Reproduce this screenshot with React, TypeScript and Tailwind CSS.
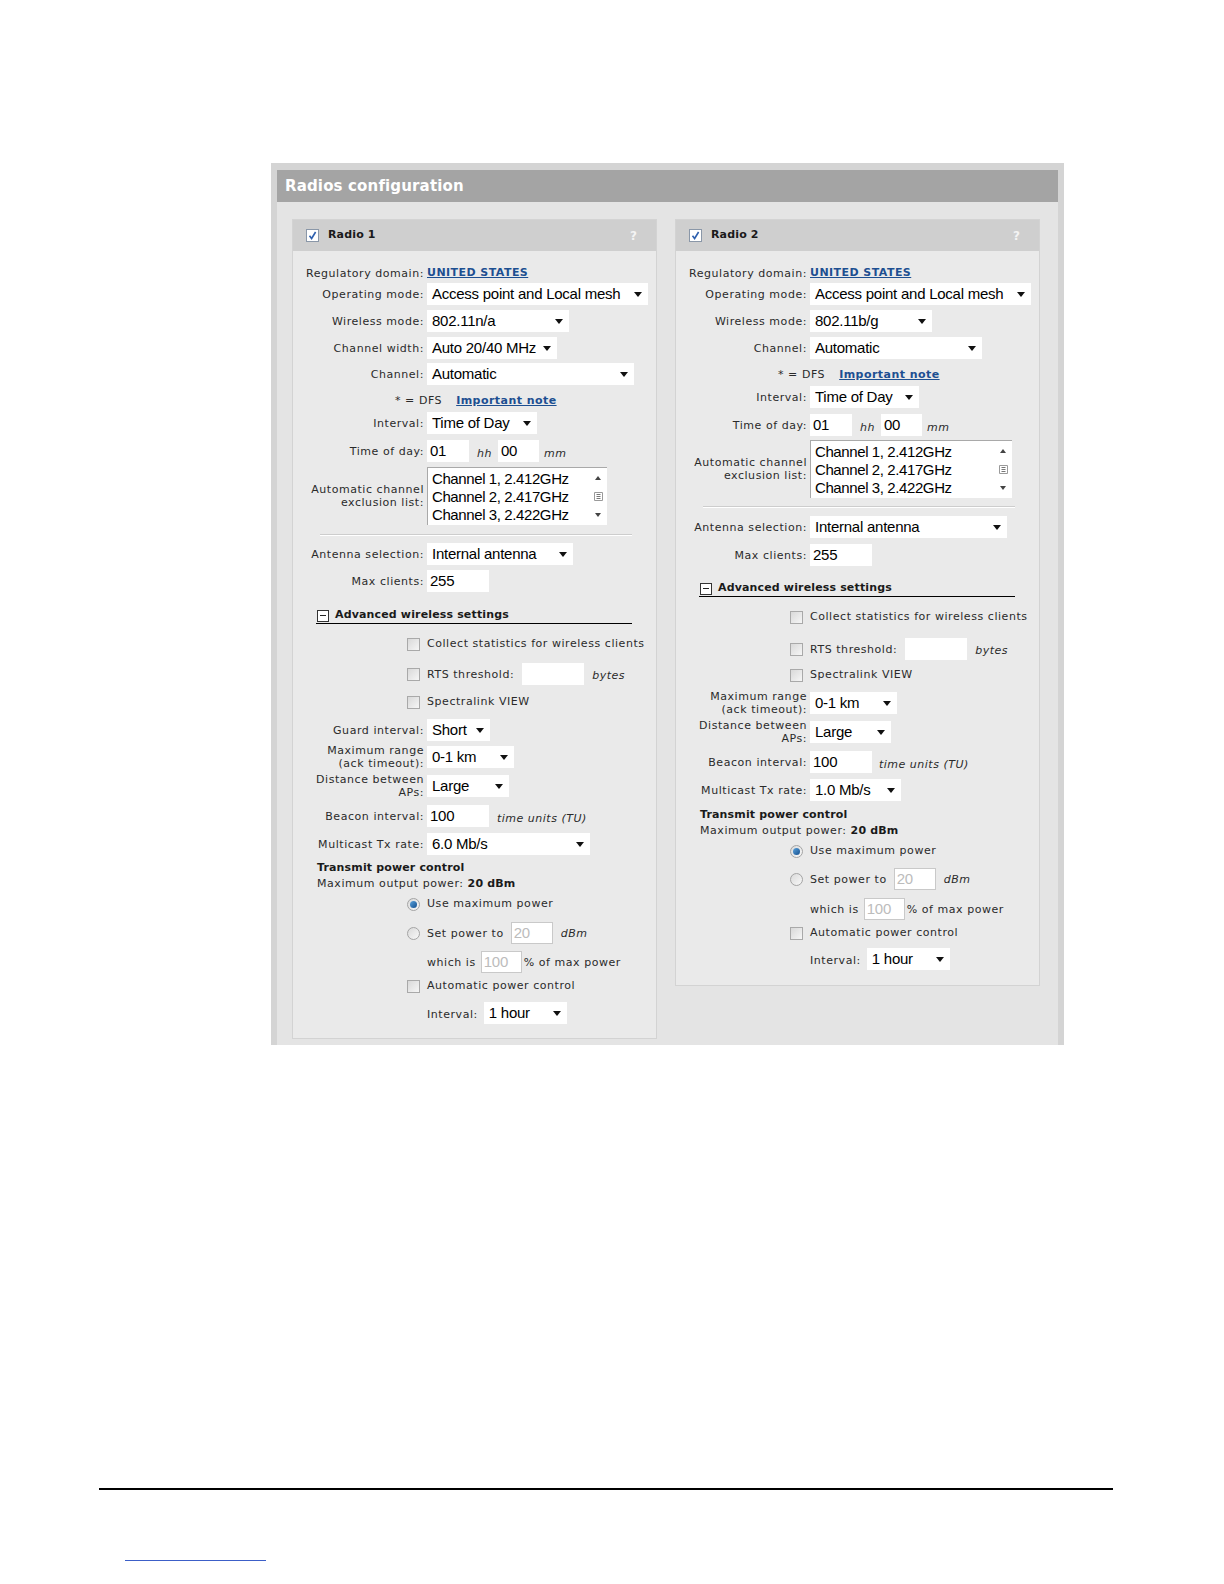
import type { ReactNode } from "react";

const LBL = "font-['DejaVu_Sans',Verdana,sans-serif] text-[11px] tracking-[0.55px] text-[#2a2a2a]";
const BOLD = "font-['DejaVu_Sans',Verdana,sans-serif] text-[11px] font-bold tracking-[0.15px] text-[#1a1a1a]";
const FONT_FIELD = "font-['Liberation_Sans',Arial,sans-serif] text-[15px] tracking-[-0.25px]";
const NOTE = "font-['DejaVu_Sans',Verdana,sans-serif] text-[11px] italic tracking-[0.5px] text-[#2a2a2a]";
const LINK = "font-['DejaVu_Sans',Verdana,sans-serif] text-[11px] font-bold tracking-[0.45px] text-[#1d4f91] underline";

function Caret() {
  return (
    <svg width="8" height="5" viewBox="0 0 8 5" className="shrink-0">
      <path d="M0 0H8L4 5Z" fill="#111" />
    </svg>
  );
}

function Select({ value, className }: { value: string; className: string }) {
  return (
    <div className={`flex h-[22px] items-center justify-between bg-white pl-[5px] pr-[6px] text-black ${FONT_FIELD} ${className}`}>
      <span className="whitespace-nowrap">{value}</span>
      <Caret />
    </div>
  );
}

function Input({ value, className }: { value?: string; className: string }) {
  return <div className={`flex h-[22px] items-center bg-white pl-[3px] text-black ${FONT_FIELD} ${className}`}>{value}</div>;
}

function DisabledInput({ value, className }: { value: string; className: string }) {
  return (
    <div className={`flex h-[22px] items-center border border-[#c9c9c9] bg-white pl-[2px] text-[#bcbcbc] ${FONT_FIELD} ${className}`}>
      {value}
    </div>
  );
}

function Check({ checked }: { checked?: boolean }) {
  if (checked)
    return (
      <div className="flex h-[13px] w-[13px] shrink-0 items-center justify-center border border-[#8a97a8] bg-white">
        <svg width="9" height="9" viewBox="0 0 9 9">
          <path d="M1.5 4.8L3.6 7.5L7.6 1" stroke="#2d5fae" strokeWidth="1.6" fill="none" />
        </svg>
      </div>
    );
  return <div className="h-[13px] w-[13px] shrink-0 border border-[#a9a9a9] bg-gradient-to-br from-[#d9d9d9] to-[#f6f6f6]" />;
}

function Radio({ checked }: { checked?: boolean }) {
  return (
    <div className="flex h-[13px] w-[13px] shrink-0 items-center justify-center rounded-full border border-[#a4a4a4] bg-gradient-to-br from-[#dadada] to-[#f8f8f8]">
      {checked && <div className="h-[7px] w-[7px] rounded-full bg-gradient-to-br from-[#5aa2dc] to-[#14508f]" />}
    </div>
  );
}

function Row({ label, className, children }: { label: ReactNode; className: string; children: ReactNode }) {
  return (
    <div className={`flex items-center ${className}`}>
      <div className={`w-[124px] shrink-0 whitespace-nowrap text-right leading-[13px] ${LBL}`}>{label}</div>
      <div className="ml-[3px] flex items-center">{children}</div>
    </div>
  );
}

function ListBox({ className }: { className: string }) {
  return (
    <div className={`flex h-[58px] border-t border-l border-[#a9a9a9] bg-white ${className}`}>
      <div className="flex-1 pl-[4px] pt-[2px] font-['Liberation_Sans',Arial,sans-serif] text-[15px] leading-[18px] tracking-[-0.4px] text-black">
        <div>Channel 1, 2.412GHz</div>
        <div>Channel 2, 2.417GHz</div>
        <div>Channel 3, 2.422GHz</div>
      </div>
      <div className="flex w-[18px] flex-col items-center justify-between py-[8px]">
        <svg width="6" height="4" viewBox="0 0 6 4">
          <path d="M0 4H6L3 0Z" fill="#444" />
        </svg>
        <svg width="11" height="9" viewBox="0 0 11 9">
          <path d="M1.5 0.5H9.5V8.5H1.5Z" fill="none" stroke="#9a9a9a" />
          <path d="M3.5 2.5H7.5M3.5 4.5H7.5M3.5 6.5H7.5" stroke="#777" />
        </svg>
        <svg width="6" height="4" viewBox="0 0 6 4">
          <path d="M0 0H6L3 4Z" fill="#444" />
        </svg>
      </div>
    </div>
  );
}

function CheckRow({ className, children }: { className: string; children: ReactNode }) {
  return <div className={`ml-[107px] flex items-center gap-[7px] ${LBL} ${className}`}>{children}</div>;
}

function Advanced({ className }: { className: string }) {
  return (
    <div className={`ml-[16px] flex h-[18px] w-[316px] items-center gap-[6px] border-b border-black pt-[2px] ${className}`}>
      <div className="ml-[1px] flex h-[12px] w-[12px] items-center justify-center border border-[#333] bg-white">
        <div className="h-px w-[6px] bg-[#222]" />
      </div>
      <span className={BOLD}>Advanced wireless settings</span>
    </div>
  );
}

function Separator({ className }: { className: string }) {
  return <div className={`ml-[20px] h-[2px] w-[312px] border-t border-[#cdcdcd] border-b border-b-white ${className}`} />;
}

function TimeOfDay() {
  return (
    <>
      <Input value="01" className="w-[42px]" />
      <span className={`ml-[8px] mt-[6px] ${NOTE}`}>hh</span>
      <Input value="00" className="ml-[6px] w-[41px]" />
      <span className={`ml-[5px] mt-[6px] ${NOTE}`}>mm</span>
    </>
  );
}

function Panel({ title, className, children }: { title: string; className: string; children: ReactNode }) {
  return (
    <div className="w-[365px] border border-[#d3d3d3] bg-[#eaeaea]">
      <div className="flex h-[31px] items-center bg-[#cfcfcf] pl-[13px] pr-[19px]">
        <Check checked />
        <span className={`ml-[9px] ${BOLD}`}>{title}</span>
        <span className="ml-auto font-['DejaVu_Sans',sans-serif] text-[12px] font-bold text-[#f4f4f4]">?</span>
      </div>
      <div className={`flex flex-col px-[7px] pt-[13px] ${className}`}>{children}</div>
    </div>
  );
}

function PowerRows({ gaps }: { gaps: string[] }) {
  return (
    <>
      <div className={`ml-[17px] flex h-[16px] items-center ${BOLD} ${gaps[0]}`}>Transmit power control</div>
      <div className={`ml-[17px] flex h-[16px] items-center whitespace-nowrap ${LBL}`}>
        Maximum output power:&nbsp;<b className="tracking-[0.15px] text-[#1a1a1a]">20 dBm</b>
      </div>
      <CheckRow className={`h-[18px] ${gaps[1]}`}>
        <Radio checked />
        <span>Use maximum power</span>
      </CheckRow>
      <div className={`ml-[107px] flex h-[22px] items-center ${LBL} ${gaps[2]}`}>
        <Radio />
        <span className="ml-[7px] mt-[2px]">Set power to</span>
        <DisabledInput value="20" className="ml-[7px] w-[42px]" />
        <span className={`ml-[8px] mt-[2px] ${NOTE}`}>dBm</span>
      </div>
      <div className={`ml-[127px] flex h-[22px] items-center ${LBL} ${gaps[3]}`}>
        <span className="mt-[2px]">which is</span>
        <DisabledInput value="100" className="ml-[5px] w-[41px]" />
        <span className="ml-[2px] mt-[2px] whitespace-nowrap">% of max power</span>
      </div>
      <CheckRow className={`h-[18px] ${gaps[4]}`}>
        <Check />
        <span>Automatic power control</span>
      </CheckRow>
      <div className={`ml-[127px] flex h-[22px] items-center ${LBL} ${gaps[5]}`}>
        <span className="mt-[4px]">Interval:</span>
        <Select value="1 hour" className="ml-[6px] w-[83px]" />
      </div>
    </>
  );
}

function TwoLine({ a, b }: { a: string; b: string }) {
  return (
    <>
      {a}
      <br />
      {b}
    </>
  );
}

function Radio1() {
  return (
    <Panel title="Radio 1" className="pb-[14px]">
      <Row label="Regulatory domain:" className="h-[18px]">
        <span className={LINK}>UNITED STATES</span>
      </Row>
      <Row label="Operating mode:" className="mt-[1px] h-[22px]">
        <Select value="Access point and Local mesh" className="w-[221px]" />
      </Row>
      <Row label="Wireless mode:" className="mt-[5px] h-[22px]">
        <Select value="802.11n/a" className="w-[142px]" />
      </Row>
      <Row label="Channel width:" className="mt-[5px] h-[22px]">
        <Select value="Auto 20/40 MHz" className="w-[130px]" />
      </Row>
      <Row label="Channel:" className="mt-[4px] h-[22px]">
        <Select value="Automatic" className="w-[207px]" />
      </Row>
      <div className={`ml-[95px] mt-[8px] flex h-[16px] items-center ${LBL}`}>
        <span>* = DFS</span>
        <span className={`ml-[14px] ${LINK}`}>Important note</span>
      </div>
      <Row label="Interval:" className="mt-[3px] h-[22px]">
        <Select value="Time of Day" className="w-[110px]" />
      </Row>
      <Row label="Time of day:" className="mt-[6px] h-[22px]">
        <TimeOfDay />
      </Row>
      <Row label={<TwoLine a="Automatic channel" b="exclusion list:" />} className="mt-[5px] h-[58px]">
        <ListBox className="w-[180px]" />
      </Row>
      <Separator className="mt-[9px]" />
      <Row label="Antenna selection:" className="mt-[7px] h-[22px]">
        <Select value="Internal antenna" className="w-[146px]" />
      </Row>
      <Row label="Max clients:" className="mt-[5px] h-[22px]">
        <Input value="255" className="w-[62px]" />
      </Row>
      <Advanced className="mt-[14px]" />
      <CheckRow className="mt-[11px] h-[18px]">
        <Check />
        <span className="whitespace-nowrap">Collect statistics for wireless clients</span>
      </CheckRow>
      <div className={`ml-[107px] mt-[10px] flex h-[22px] items-center ${LBL}`}>
        <Check />
        <span className="ml-[7px] mt-[2px]">RTS threshold:</span>
        <Input className="ml-[8px] w-[62px]" />
        <span className={`ml-[8px] mt-[4px] ${NOTE}`}>bytes</span>
      </div>
      <CheckRow className="mt-[8px] h-[18px]">
        <Check />
        <span>Spectralink VIEW</span>
      </CheckRow>
      <Row label="Guard interval:" className="mt-[8px] h-[22px]">
        <Select value="Short" className="w-[63px]" />
      </Row>
      <Row label={<TwoLine a="Maximum range" b="(ack timeout):" />} className="mt-[5px] h-[22px]">
        <Select value="0-1 km" className="w-[87px]" />
      </Row>
      <Row label={<TwoLine a="Distance between" b="APs:" />} className="mt-[7px] h-[22px]">
        <Select value="Large" className="w-[82px]" />
      </Row>
      <Row label="Beacon interval:" className="mt-[8px] h-[22px]">
        <Input value="100" className="w-[62px]" />
        <span className={`ml-[8px] mt-[6px] whitespace-nowrap ${NOTE}`}>time units (TU)</span>
      </Row>
      <Row label="Multicast Tx rate:" className="mt-[6px] h-[22px]">
        <Select value="6.0 Mb/s" className="w-[163px]" />
      </Row>
      <PowerRows gaps={["mt-[5px]", "mt-[3px]", "mt-[9px]", "mt-[7px]", "mt-[4px]", "mt-[7px]"]} />
    </Panel>
  );
}

function Radio2() {
  return (
    <Panel title="Radio 2" className="pb-[15px]">
      <Row label="Regulatory domain:" className="h-[18px]">
        <span className={LINK}>UNITED STATES</span>
      </Row>
      <Row label="Operating mode:" className="mt-[1px] h-[22px]">
        <Select value="Access point and Local mesh" className="w-[221px]" />
      </Row>
      <Row label="Wireless mode:" className="mt-[5px] h-[22px]">
        <Select value="802.11b/g" className="w-[122px]" />
      </Row>
      <Row label="Channel:" className="mt-[5px] h-[22px]">
        <Select value="Automatic" className="w-[172px]" />
      </Row>
      <div className={`ml-[95px] mt-[8px] flex h-[16px] items-center ${LBL}`}>
        <span>* = DFS</span>
        <span className={`ml-[14px] ${LINK}`}>Important note</span>
      </div>
      <Row label="Interval:" className="mt-[3px] h-[22px]">
        <Select value="Time of Day" className="w-[109px]" />
      </Row>
      <Row label="Time of day:" className="mt-[6px] h-[22px]">
        <TimeOfDay />
      </Row>
      <Row label={<TwoLine a="Automatic channel" b="exclusion list:" />} className="mt-[4px] h-[58px]">
        <ListBox className="w-[202px]" />
      </Row>
      <Separator className="mt-[8px]" />
      <Row label="Antenna selection:" className="mt-[8px] h-[22px]">
        <Select value="Internal antenna" className="w-[197px]" />
      </Row>
      <Row label="Max clients:" className="mt-[6px] h-[22px]">
        <Input value="255" className="w-[62px]" />
      </Row>
      <Advanced className="mt-[13px]" />
      <CheckRow className="mt-[11px] h-[18px]">
        <Check />
        <span className="whitespace-nowrap">Collect statistics for wireless clients</span>
      </CheckRow>
      <div className={`ml-[107px] mt-[12px] flex h-[22px] items-center ${LBL}`}>
        <Check />
        <span className="ml-[7px] mt-[2px]">RTS threshold:</span>
        <Input className="ml-[8px] w-[62px]" />
        <span className={`ml-[8px] mt-[4px] ${NOTE}`}>bytes</span>
      </div>
      <CheckRow className="mt-[6px] h-[18px]">
        <Check />
        <span>Spectralink VIEW</span>
      </CheckRow>
      <Row label={<TwoLine a="Maximum range" b="(ack timeout):" />} className="mt-[8px] h-[22px]">
        <Select value="0-1 km" className="w-[87px]" />
      </Row>
      <Row label={<TwoLine a="Distance between" b="APs:" />} className="mt-[7px] h-[22px]">
        <Select value="Large" className="w-[81px]" />
      </Row>
      <Row label="Beacon interval:" className="mt-[8px] h-[22px]">
        <Input value="100" className="w-[62px]" />
        <span className={`ml-[7px] mt-[6px] whitespace-nowrap ${NOTE}`}>time units (TU)</span>
      </Row>
      <Row label="Multicast Tx rate:" className="mt-[6px] h-[22px]">
        <Select value="1.0 Mb/s" className="w-[91px]" />
      </Row>
      <PowerRows gaps={["mt-[6px]", "mt-[3px]", "mt-[8px]", "mt-[8px]", "mt-[4px]", "mt-[6px]"]} />
    </Panel>
  );
}

export default function App() {
  return (
    <div className="flex w-full flex-col bg-white">
      <div className="ml-[271px] mt-[163px] w-[793px] bg-[#d4d4d4] px-[6px] pt-[7px]">
        <div className="flex h-[32px] items-center bg-[#a4a4a4] pl-[8px] font-['DejaVu_Sans',Verdana,sans-serif] text-[15px] font-bold tracking-[0.15px] text-white">
          Radios configuration
        </div>
        <div className="flex items-start gap-[18px] bg-[#e4e4e4] px-[15px] pb-[6px] pt-[17px]">
          <Radio1 />
          <Radio2 />
        </div>
      </div>
      <div className="ml-[99px] mt-[443px] h-[2px] w-[1014px] bg-black" />
      <div className="ml-[125px] mt-[70px] h-px w-[141px] bg-[#3c5fc8]" />
    </div>
  );
}
